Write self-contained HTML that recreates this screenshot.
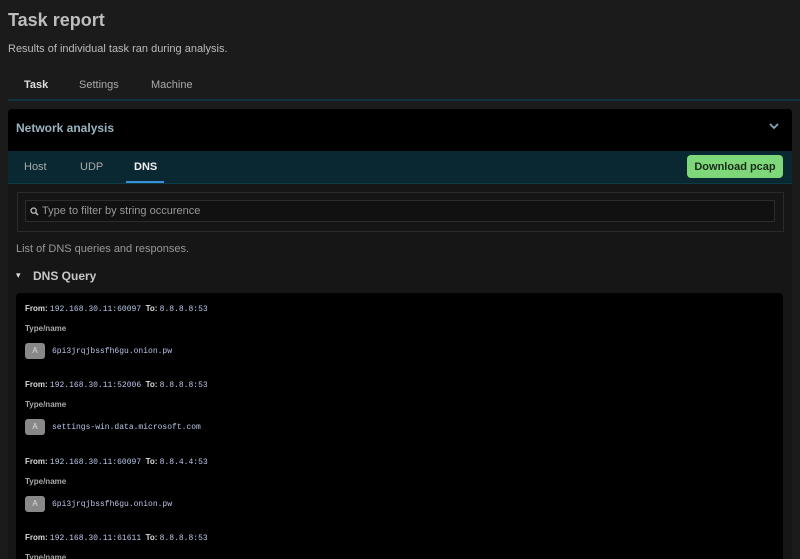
<!DOCTYPE html>
<html><head><style>
*{margin:0;padding:0;box-sizing:border-box}
html,body{width:800px;height:559px;overflow:hidden}
body{background:#1b1b1b;font-family:"Liberation Sans",sans-serif;color:#ccc;position:relative}
.a{position:absolute}
.mono{font-family:"Liberation Mono",monospace}
</style></head><body>
<div class="a" style="left:8px;top:10px;font-size:18px;font-weight:bold;color:#bdbdbd">Task report</div>
<div class="a" style="left:8px;top:43px;font-size:11px;color:#bbb">Results of individual task ran during analysis.</div>
<div class="a" style="left:24px;top:79px;font-size:11px;font-weight:bold;color:#ddd">Task</div>
<div class="a" style="left:79px;top:79px;font-size:11px;color:#aaa">Settings</div>
<div class="a" style="left:151px;top:79px;font-size:11px;color:#aaa">Machine</div>
<div class="a" style="left:8px;top:99px;width:792px;height:2px;background:#0e3440"></div>
<div class="a" style="left:8px;top:109px;width:784px;height:460px;background:#161616;border-radius:4px 4px 0 0;overflow:hidden">
 <div style="height:42px;background:#000;position:relative">
  <div class="a" style="left:8px;top:12px;font-size:12px;font-weight:bold;color:#9ab4c2">Network analysis</div>
  <svg class="a" style="left:760px;top:12px" width="12" height="10" viewBox="0 0 12 10"><path d="M2 3l4 4 4-4" stroke="#8aa6b6" stroke-width="1.8" fill="none"/></svg>
 </div>
 <div style="height:33px;background:#0a2832;position:relative;border-bottom:1px solid #0e3a46">
  <div class="a" style="left:16px;top:10px;font-size:11px;color:#aaa">Host</div>
  <div class="a" style="left:72px;top:10px;font-size:11px;color:#aaa">UDP</div>
  <div class="a" style="left:126px;top:10px;font-size:11px;font-weight:bold;color:#eee">DNS</div>
  <div class="a" style="left:118px;top:30px;width:38px;height:2px;background:#3b8fd9"></div>
  <div class="a" style="left:679px;top:4px;width:96px;height:23px;background:#7ed87a;border-radius:4px;color:#1a2a1a;font-size:11px;font-weight:bold;text-align:center;line-height:24px">Download pcap</div>
 </div>
</div>
<div class="a" style="left:17px;top:192px;width:767px;height:40px;border:1px solid #2a2a2a;background:#151515"></div>
<div class="a" style="left:25px;top:200px;width:750px;height:22px;border:1px solid #2c2c2c;background:#111"></div>
<svg class="a" style="left:30px;top:207px" width="9" height="9" viewBox="0 0 9 9"><circle cx="3.6" cy="3.6" r="2.6" stroke="#bbb" stroke-width="1.3" fill="none"/><path d="M5.5 5.5L8 8" stroke="#bbb" stroke-width="1.5"/></svg>
<div class="a" style="left:42px;top:205px;font-size:11px;color:#999">Type to filter by string occurence</div>
<div class="a" style="left:16px;top:243px;font-size:11px;color:#999">List of DNS queries and responses.</div>
<div class="a" style="left:16px;top:270px;font-size:9px;color:#ddd">▾</div>
<div class="a" style="left:33px;top:269px;font-size:12px;font-weight:bold;color:#c8c8c8">DNS Query</div>
<div class="a" style="left:16px;top:293px;width:767px;height:280px;background:#000;border-radius:4px"></div>
<div class="a" style="left:25px;top:303px;font-size:8px;line-height:11px">
 <div style="position:absolute;top:0;white-space:nowrap"><b style="color:#ddd">From:</b> <span class="mono" style="color:#b9c7e8">192.168.30.11:60097</span> &nbsp;<b style="color:#ddd">To:</b> <span class="mono" style="color:#b9c7e8">8.8.8.8:53</span></div>
 <div style="position:absolute;top:20px;color:#aaa;font-weight:bold;white-space:nowrap">Type/name</div>
 <div style="position:absolute;top:40px;width:20px;height:16px;background:#888;border-radius:3px;color:#ddd;text-align:center;line-height:16px">A</div>
 <div class="mono" style="position:absolute;top:43px;left:27px;color:#b9c7e8;white-space:nowrap">6pi3jrqjbssfh6gu.onion.pw</div>
</div>
<div class="a" style="left:25px;top:379px;font-size:8px;line-height:11px">
 <div style="position:absolute;top:0;white-space:nowrap"><b style="color:#ddd">From:</b> <span class="mono" style="color:#b9c7e8">192.168.30.11:52006</span> &nbsp;<b style="color:#ddd">To:</b> <span class="mono" style="color:#b9c7e8">8.8.8.8:53</span></div>
 <div style="position:absolute;top:20px;color:#aaa;font-weight:bold;white-space:nowrap">Type/name</div>
 <div style="position:absolute;top:40px;width:20px;height:16px;background:#888;border-radius:3px;color:#ddd;text-align:center;line-height:16px">A</div>
 <div class="mono" style="position:absolute;top:43px;left:27px;color:#b9c7e8;white-space:nowrap">settings-win.data.microsoft.com</div>
</div>
<div class="a" style="left:25px;top:456px;font-size:8px;line-height:11px">
 <div style="position:absolute;top:0;white-space:nowrap"><b style="color:#ddd">From:</b> <span class="mono" style="color:#b9c7e8">192.168.30.11:60097</span> &nbsp;<b style="color:#ddd">To:</b> <span class="mono" style="color:#b9c7e8">8.8.4.4:53</span></div>
 <div style="position:absolute;top:20px;color:#aaa;font-weight:bold;white-space:nowrap">Type/name</div>
 <div style="position:absolute;top:40px;width:20px;height:16px;background:#888;border-radius:3px;color:#ddd;text-align:center;line-height:16px">A</div>
 <div class="mono" style="position:absolute;top:43px;left:27px;color:#b9c7e8;white-space:nowrap">6pi3jrqjbssfh6gu.onion.pw</div>
</div>
<div class="a" style="left:25px;top:532px;font-size:8px;line-height:11px">
 <div style="position:absolute;top:0;white-space:nowrap"><b style="color:#ddd">From:</b> <span class="mono" style="color:#b9c7e8">192.168.30.11:61611</span> &nbsp;<b style="color:#ddd">To:</b> <span class="mono" style="color:#b9c7e8">8.8.8.8:53</span></div>
 <div style="position:absolute;top:20px;color:#aaa;font-weight:bold;white-space:nowrap">Type/name</div>
</div>
</body></html>
